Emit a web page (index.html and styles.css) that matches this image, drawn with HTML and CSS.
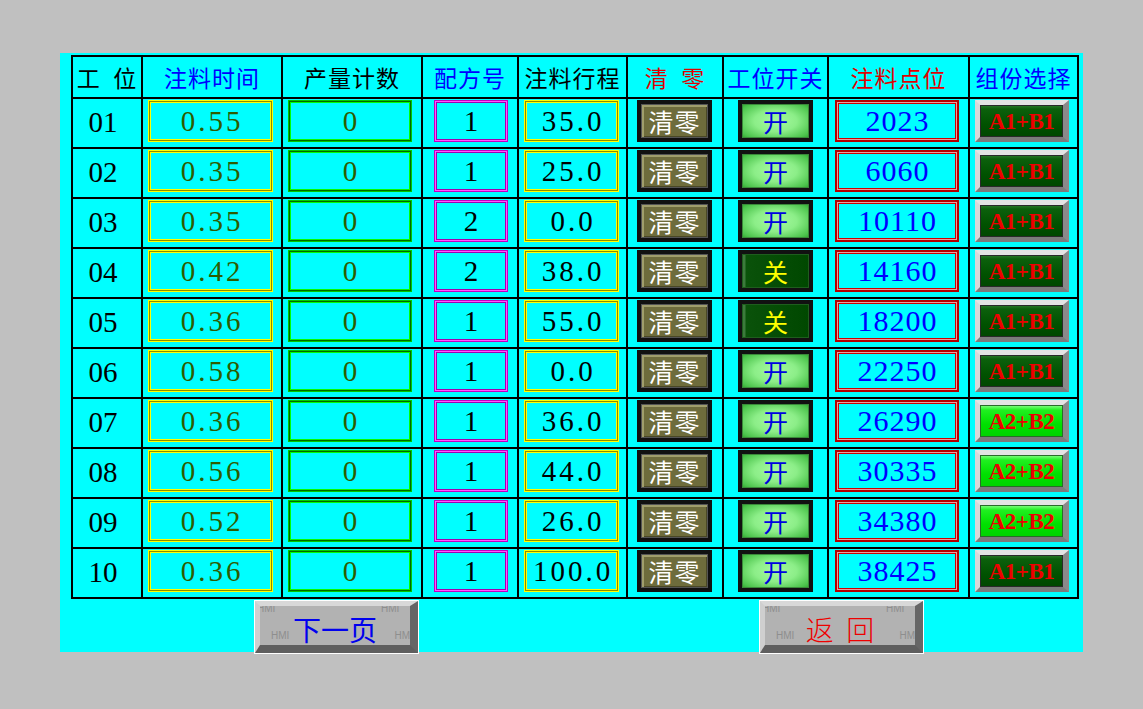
FILE: index.html
```html
<!DOCTYPE html>
<html lang="zh">
<head>
<meta charset="utf-8">
<title>注料参数</title>
<link rel="stylesheet" href="styles.css">
</head>
<body>
<div class="panel">
  <div class="grid">
    <div class="hd">工&nbsp;&nbsp;位</div>
    <div class="hd blue">注料时间</div>
    <div class="hd">产量计数</div>
    <div class="hd blue">配方号</div>
    <div class="hd">注料行程</div>
    <div class="hd red">清&nbsp;&nbsp;零</div>
    <div class="hd blue">工位开关</div>
    <div class="hd red">注料点位</div>
    <div class="hd blue">组份选择</div>

    <div class="cell num">01</div>
    <div class="cell c2"><div class="box yb grn">0.55</div></div>
    <div class="cell c3"><div class="box gb grn">0</div></div>
    <div class="cell c4"><div class="box pb">1</div></div>
    <div class="cell c5"><div class="box yb">35.0</div></div>
    <div class="cell c6"><div class="clr">清零</div></div>
    <div class="cell c7"><div class="sw on">开</div></div>
    <div class="cell c8"><div class="box rb">2023</div></div>
    <div class="cell c9"><div class="grp a1">A1+B1</div></div>

    <div class="cell num">02</div>
    <div class="cell c2"><div class="box yb grn">0.35</div></div>
    <div class="cell c3"><div class="box gb grn">0</div></div>
    <div class="cell c4"><div class="box pb">1</div></div>
    <div class="cell c5"><div class="box yb">25.0</div></div>
    <div class="cell c6"><div class="clr">清零</div></div>
    <div class="cell c7"><div class="sw on">开</div></div>
    <div class="cell c8"><div class="box rb">6060</div></div>
    <div class="cell c9"><div class="grp a1">A1+B1</div></div>

    <div class="cell num">03</div>
    <div class="cell c2"><div class="box yb grn">0.35</div></div>
    <div class="cell c3"><div class="box gb grn">0</div></div>
    <div class="cell c4"><div class="box pb">2</div></div>
    <div class="cell c5"><div class="box yb">0.0</div></div>
    <div class="cell c6"><div class="clr">清零</div></div>
    <div class="cell c7"><div class="sw on">开</div></div>
    <div class="cell c8"><div class="box rb">10110</div></div>
    <div class="cell c9"><div class="grp a1">A1+B1</div></div>

    <div class="cell num">04</div>
    <div class="cell c2"><div class="box yb grn">0.42</div></div>
    <div class="cell c3"><div class="box gb grn">0</div></div>
    <div class="cell c4"><div class="box pb">2</div></div>
    <div class="cell c5"><div class="box yb">38.0</div></div>
    <div class="cell c6"><div class="clr">清零</div></div>
    <div class="cell c7"><div class="sw off">关</div></div>
    <div class="cell c8"><div class="box rb">14160</div></div>
    <div class="cell c9"><div class="grp a1">A1+B1</div></div>

    <div class="cell num">05</div>
    <div class="cell c2"><div class="box yb grn">0.36</div></div>
    <div class="cell c3"><div class="box gb grn">0</div></div>
    <div class="cell c4"><div class="box pb">1</div></div>
    <div class="cell c5"><div class="box yb">55.0</div></div>
    <div class="cell c6"><div class="clr">清零</div></div>
    <div class="cell c7"><div class="sw off">关</div></div>
    <div class="cell c8"><div class="box rb">18200</div></div>
    <div class="cell c9"><div class="grp a1">A1+B1</div></div>

    <div class="cell num">06</div>
    <div class="cell c2"><div class="box yb grn">0.58</div></div>
    <div class="cell c3"><div class="box gb grn">0</div></div>
    <div class="cell c4"><div class="box pb">1</div></div>
    <div class="cell c5"><div class="box yb">0.0</div></div>
    <div class="cell c6"><div class="clr">清零</div></div>
    <div class="cell c7"><div class="sw on">开</div></div>
    <div class="cell c8"><div class="box rb">22250</div></div>
    <div class="cell c9"><div class="grp a1">A1+B1</div></div>

    <div class="cell num">07</div>
    <div class="cell c2"><div class="box yb grn">0.36</div></div>
    <div class="cell c3"><div class="box gb grn">0</div></div>
    <div class="cell c4"><div class="box pb">1</div></div>
    <div class="cell c5"><div class="box yb">36.0</div></div>
    <div class="cell c6"><div class="clr">清零</div></div>
    <div class="cell c7"><div class="sw on">开</div></div>
    <div class="cell c8"><div class="box rb">26290</div></div>
    <div class="cell c9"><div class="grp a2">A2+B2</div></div>

    <div class="cell num">08</div>
    <div class="cell c2"><div class="box yb grn">0.56</div></div>
    <div class="cell c3"><div class="box gb grn">0</div></div>
    <div class="cell c4"><div class="box pb">1</div></div>
    <div class="cell c5"><div class="box yb">44.0</div></div>
    <div class="cell c6"><div class="clr">清零</div></div>
    <div class="cell c7"><div class="sw on">开</div></div>
    <div class="cell c8"><div class="box rb">30335</div></div>
    <div class="cell c9"><div class="grp a2">A2+B2</div></div>

    <div class="cell num">09</div>
    <div class="cell c2"><div class="box yb grn">0.52</div></div>
    <div class="cell c3"><div class="box gb grn">0</div></div>
    <div class="cell c4"><div class="box pb">1</div></div>
    <div class="cell c5"><div class="box yb">26.0</div></div>
    <div class="cell c6"><div class="clr">清零</div></div>
    <div class="cell c7"><div class="sw on">开</div></div>
    <div class="cell c8"><div class="box rb">34380</div></div>
    <div class="cell c9"><div class="grp a2">A2+B2</div></div>

    <div class="cell num">10</div>
    <div class="cell c2"><div class="box yb grn">0.36</div></div>
    <div class="cell c3"><div class="box gb grn">0</div></div>
    <div class="cell c4"><div class="box pb">1</div></div>
    <div class="cell c5"><div class="box yb">100.0</div></div>
    <div class="cell c6"><div class="clr">清零</div></div>
    <div class="cell c7"><div class="sw on">开</div></div>
    <div class="cell c8"><div class="box rb">38425</div></div>
    <div class="cell c9"><div class="grp a1">A1+B1</div></div>
  </div>

  <div class="nav">
    <div class="bigbtn next"><span class="lbl">下一页</span><span class="bwm tl">HMI</span><span class="bwm tr">HMI</span><span class="bwm bl">HMI</span><span class="bwm br">HM</span></div>
    <div class="bigbtn back"><span class="lbl">返&nbsp;&nbsp;回</span><span class="bwm tl">HMI</span><span class="bwm tr">HMI</span><span class="bwm bl">HMI</span><span class="bwm br">HM</span></div>
  </div>
</div>
</body>
</html>
```
FILE: styles.css
```css
html, body {
  margin: 0;
  padding: 0;
  background: #c0c0c0;
  width: 1143px;
  height: 709px;
  overflow: hidden;
}
body {
  padding-top: 53px;
  box-sizing: border-box;
  font-family: "Liberation Serif", "Noto Sans CJK SC", serif;
}
.panel {
  margin-left: 60px;
  width: 1023px;
  height: 599px;
  background: #00ffff;
  padding: 2px 0 0 11px;
  box-sizing: border-box;
}
.grid {
  display: grid;
  grid-template-columns: 68px 138px 138px 94px 107px 94px 103px 139px 107px;
  grid-template-rows: 40px repeat(10, 48px);
  gap: 2px;
  padding: 2px;
  background: #000;
  width: max-content;
}
.hd, .cell {
  background: #00ffff;
}
.hd {
  display: flex;
  align-items: center;
  justify-content: center;
  font-family: "Noto Sans CJK SC", sans-serif;
  font-size: 23px;
  line-height: 1;
  color: #000;
  letter-spacing: 1px;
}
.hd.blue { color: #0000ff; }
.hd.red { color: #e00000; }

.cell {
  display: flex;
  align-items: flex-start;
  justify-content: flex-start;
  padding-top: 1px;
  box-sizing: border-box;
}
.cell.num {
  align-items: center;
  justify-content: center;
  padding: 0 8px 2px 0;
  font-size: 29px;
  color: #000;
}
.c2 { padding-left: 5px; }
.c3 { padding-left: 5px; }
.c4 { padding-left: 11px; }
.c5 { padding-left: 5px; }
.c6 { padding-left: 9px; }
.c7 { padding-left: 14px; }
.c8 { padding-left: 6px; }
.c9 { padding-left: 5px; }

.box {
  box-sizing: border-box;
  height: 42px;
  display: flex;
  align-items: center;
  justify-content: center;
  font-size: 29px;
  color: #000;
  letter-spacing: 3px;
  text-indent: 3px;
  border: 1px solid;
}
.c2 .box { width: 125px; }
.c3 .box { width: 124px; }
.c4 .box { width: 74px; }
.c5 .box { width: 95px; }
.c8 .box { width: 124px; letter-spacing: 1px; text-indent: 1px; font-size: 30px; }
.box.grn { color: #2e5c00; }
.yb {
  border-color: #ffff00;
  box-shadow: inset 0 0 0 1px #8c8c00, inset 0 0 0 2px #ffff00;
}
.gb {
  border-color: #00c800;
  box-shadow: inset 0 0 0 1px #006a00, inset 0 0 0 2px #00ff00;
}
.pb {
  border-color: #c000c0;
  box-shadow: inset 0 0 0 1px #ff55ff, inset 0 0 0 2px #a000b0;
}
.rb {
  border: 2px solid #b40000;
  box-shadow: inset 0 0 0 1px #e6a0a0, inset 0 0 0 2px #d00000;
  color: #0000ff;
}

.clr, .sw, .grp {
  box-sizing: border-box;
  height: 42px;
  display: flex;
  align-items: center;
  justify-content: center;
  font-family: "Noto Sans CJK SC", sans-serif;
  line-height: 1;
}
.clr {
  width: 75px;
  border: 4px solid #111;
  box-shadow: 0 0 0 1px #555 inset, inset 3px 3px 0 #a09e6c, inset -2px -2px 0 #4a4826;
  background: #6e6c3c;
  color: #fff;
  font-size: 25px;
  letter-spacing: 1px;
}
.sw {
  width: 75px;
  border: 4px solid #111;
  font-size: 25px;
}
.sw.on {
  background: radial-gradient(ellipse at 50% 50%, #a6f8a0 0%, #8cee88 45%, #4cc44c 85%, #2ea62e 100%);
  color: #0000e0;
  box-shadow: inset 0 0 0 1px #3a8a3a;
}
.sw.off {
  background: linear-gradient(90deg, #3c7a3c 0, #3c7a3c 3px, #0a520a 4px, #004800 100%);
  color: #ffff00;
  box-shadow: inset 0 0 0 1px #1e5e1e;
}
.grp {
  width: 94px;
  border-style: solid;
  border-width: 5px 6px 5px 5px;
  border-color: #e4e4e4 #8a8a8a #7c7c7c #d8d8d8;
  font-family: "Liberation Serif", serif;
  font-weight: bold;
  font-size: 23px;
  letter-spacing: -0.5px;
  color: #ee0000;
}
.grp.a1 {
  background: linear-gradient(180deg, #2e7e2e 0, #0c600c 4px, #005200 60%, #004600 100%);
  box-shadow: inset 0 0 0 1px #2a2a2a;
}
.grp.a2 {
  background: linear-gradient(180deg, #8cff8c 0, #20f020 5px, #00e000 60%, #00d200 100%);
  box-shadow: inset 0 0 0 1px #2a6a2a;
}

.nav {
  display: flex;
  gap: 342px;
  padding: 2px 0 0 184px;
}
.bigbtn {
  position: relative;
  overflow: hidden;
  box-sizing: border-box;
  width: 163px;
  height: 52px;
  display: flex;
  align-items: flex-start;
  justify-content: center;
  background: #b2b2b2;
  border-style: solid;
  border-width: 5px 8px 8px 5px;
  border-color: #d8d8d8 #666 #5e5e5e #cfcfcf;
  box-shadow: 0 0 0 1px #fff;
  font-family: "Noto Sans CJK SC", sans-serif;
  font-size: 28px;
}
.lbl {
  display: block;
  line-height: 28px;
  height: 28px;
  margin-top: 9px;
}
.bigbtn.next { color: #0000ee; }
.bigbtn.back { color: #ee0000; font-weight: 300; }
.bwm {
  position: absolute;
  font-family: "Liberation Sans", sans-serif;
  font-size: 10px;
  line-height: 10px;
  height: 10px;
  color: #8e8e8e;
  white-space: nowrap;
}
.bwm.tl { top: -2px; left: -3px; }
.bwm.tr { top: -2px; left: 121px; }
.bwm.bl { top: 25px; left: 11px; }
.bwm.br { top: 25px; right: 0; }
```
